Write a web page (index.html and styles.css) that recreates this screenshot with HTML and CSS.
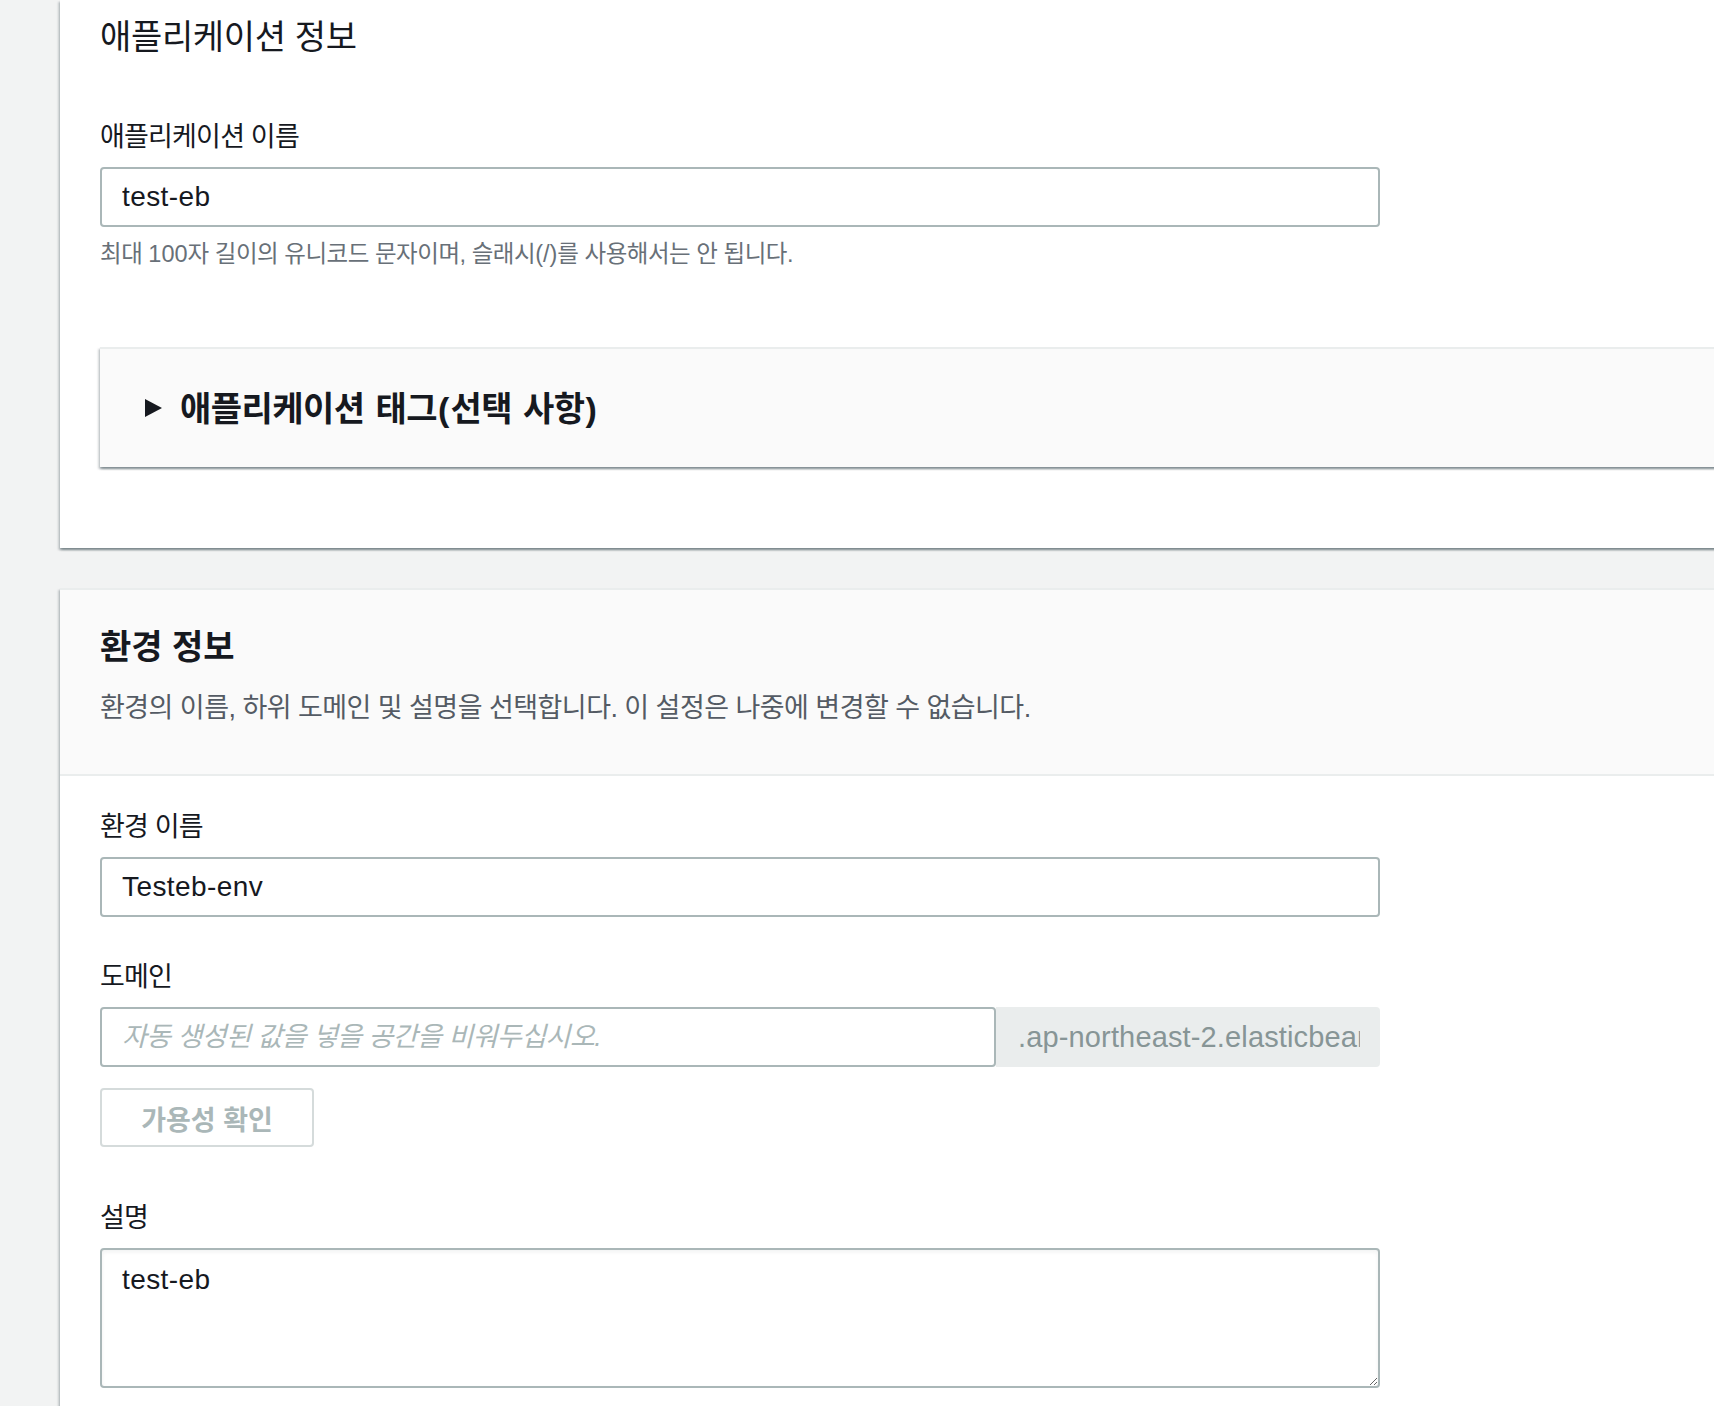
FILE: index.html
```html
<!DOCTYPE html>
<html lang="ko">
<head>
<meta charset="utf-8">
<title>애플리케이션 정보</title>
<link rel="stylesheet" href="styles.css">
</head>
<body>
<div class="page">
  <section class="panel panel-app">
    <h2 class="title">애플리케이션 정보</h2>
    <div class="field field-first">
      <label class="label" for="app-name">애플리케이션 이름</label>
      <input class="input" id="app-name" type="text" value="test-eb">
      <p class="help">최대 <span class="lat">100</span>자 길이의 유니코드 문자이며, 슬래시<span class="lat">(/)</span>를 사용해서는 안 됩니다.</p>
    </div>
    <div class="expander">
      <span class="caret"></span>
      <span class="exp-title">애플리케이션 태그<span class="paren">(</span>선택 사항<span class="paren">)</span></span>
    </div>
  </section>

  <section class="panel panel-env">
    <header class="panel-head">
      <h2 class="title bold">환경 정보</h2>
      <p class="desc">환경의 이름, 하위 도메인 및 설명을 선택합니다. 이 설정은 나중에 변경할 수 없습니다.</p>
    </header>
    <div class="panel-body">
      <div class="field">
        <label class="label" for="env-name">환경 이름</label>
        <input class="input" id="env-name" type="text" value="Testeb-env">
      </div>
      <div class="field field-domain">
        <label class="label" for="domain">도메인</label>
        <div class="domain-row">
          <input class="input input-domain" id="domain" type="text" placeholder="자동 생성된 값을 넣을 공간을 비워두십시오.">
          <div class="suffix"><span class="suffix-text">.ap-northeast-2.elasticbeanstalk.com</span></div>
        </div>
        <button class="btn" type="button">가용성 확인</button>
      </div>
      <div class="field field-desc">
        <label class="label" for="desc">설명</label>
        <textarea class="textarea" id="desc">test-eb</textarea>
      </div>
    </div>
  </section>
</div>
</body>
</html>
```

FILE: styles.css
```css
html, body {
  margin: 0;
  padding: 0;
}

body {
  background: #f2f3f3;
  overflow: hidden;
  font-family: "Liberation Sans", "Noto Sans CJK KR", sans-serif;
  color: #16191f;
}

.page {
  width: 1780px;
  padding-left: 60px;
}

.panel {
  background: #ffffff;
  box-shadow: 0 2px 2px 0 rgba(0, 28, 36, 0.3),
              2px 2px 2px 0 rgba(0, 28, 36, 0.15),
              -2px 2px 2px 0 rgba(0, 28, 36, 0.15);
}

.panel-app {
  padding: 15px 40px 81px 40px;
}

.title {
  margin: 0;
  font-size: 34px;
  line-height: 44px;
  font-weight: 400;
  letter-spacing: -0.01em;
  color: #16191f;
}

.title.bold {
  font-weight: 700;
  letter-spacing: 0;
}

.field {
  margin-top: 42px;
}

.field-first {
  margin-top: 57px;
}

.field-domain {
  margin-top: 39px;
}

.field-desc {
  margin-top: 50px;
}

.label {
  display: block;
  font-size: 27px;
  line-height: 36px;
  padding-top: 3px;
  letter-spacing: -0.03em;
  margin-bottom: 12px;
  color: #16191f;
}

.input {
  display: block;
  box-sizing: border-box;
  width: 1280px;
  height: 60px;
  margin: 0;
  padding: 0 20px;
  border: 2px solid #aab7b8;
  border-radius: 4px;
  background: #ffffff;
  font-family: "Liberation Sans", "Noto Sans CJK KR", sans-serif;
  font-size: 28px;
  letter-spacing: 0.015em;
  color: #16191f;
  outline: none;
}

.input::placeholder {
  color: #aab7b8;
  font-style: italic;
  font-size: 27px;
  letter-spacing: -0.02em;
}

.help {
  margin: 11px 0 0 0;
  font-size: 23.5px;
  line-height: 32px;
  letter-spacing: -0.02em;
  color: #687078;
}

.lat {
  letter-spacing: 0;
}

.expander {
  margin-top: 77px;
  margin-right: -200px;
  box-sizing: border-box;
  height: 120px;
  display: flex;
  align-items: center;
  padding-left: 45px;
  background: #fafafa;
  border-top: 2px solid #eaeded;
  box-shadow: 0 2px 2px 0 rgba(0, 28, 36, 0.3),
              2px 2px 2px 0 rgba(0, 28, 36, 0.15),
              -2px 2px 2px 0 rgba(0, 28, 36, 0.15);
}

.caret {
  width: 0;
  height: 0;
  border-left: 17px solid #16191f;
  border-top: 9px solid transparent;
  border-bottom: 9px solid transparent;
  margin-right: 18px;
}

.exp-title {
  font-size: 34px;
  line-height: 44px;
  padding-top: 2px;
  font-weight: 700;
  letter-spacing: -0.015em;
  word-spacing: 2px;
  color: #16191f;
}

.paren {
  letter-spacing: 0;
  padding: 0 1px;
}

.panel-env {
  margin-top: 40px;
}

.panel-head {
  background: #fafafa;
  border-top: 2px solid #eaeded;
  border-bottom: 2px solid #eaeded;
  padding: 35px 40px 48px 40px;
}

.desc {
  margin: 21px 0 0 0;
  font-size: 27px;
  line-height: 36px;
  letter-spacing: -0.02em;
  color: #545b64;
}

.panel-body {
  padding: 30px 40px 60px 40px;
}

.panel-body .field:first-child {
  margin-top: 0;
}

.domain-row {
  display: flex;
  width: 1280px;
}

.input-domain {
  width: 896px;
  flex: none;
}

.suffix {
  box-sizing: border-box;
  width: 384px;
  height: 60px;
  padding: 0 20px 0 22px;
  background: #eaeded;
  border-radius: 0 4px 4px 0;
  display: flex;
  align-items: center;
}

.suffix-text {
  display: block;
  width: 100%;
  overflow: hidden;
  white-space: nowrap;
  font-size: 29px;
  line-height: 40px;
  letter-spacing: 0.005em;
  color: #879596;
}

.btn {
  display: block;
  box-sizing: border-box;
  margin-top: 21px;
  width: 214px;
  height: 59px;
  padding: 2px 0 0 0;
  border: 2px solid #d5dbdb;
  border-radius: 4px;
  background: #ffffff;
  font-family: "Liberation Sans", "Noto Sans CJK KR", sans-serif;
  font-size: 27px;
  font-weight: 700;
  letter-spacing: 0;
  color: #aab7b8;
}

.textarea {
  display: block;
  box-sizing: border-box;
  width: 1280px;
  height: 140px;
  margin: 0;
  padding: 10px 20px;
  border: 2px solid #aab7b8;
  border-radius: 4px;
  background: #ffffff;
  box-shadow: inset 0 2px 4px rgba(0, 28, 36, 0.06);
  font-family: "Liberation Sans", "Noto Sans CJK KR", sans-serif;
  font-size: 28px;
  line-height: 40px;
  letter-spacing: 0.015em;
  color: #16191f;
  outline: none;
}
```
